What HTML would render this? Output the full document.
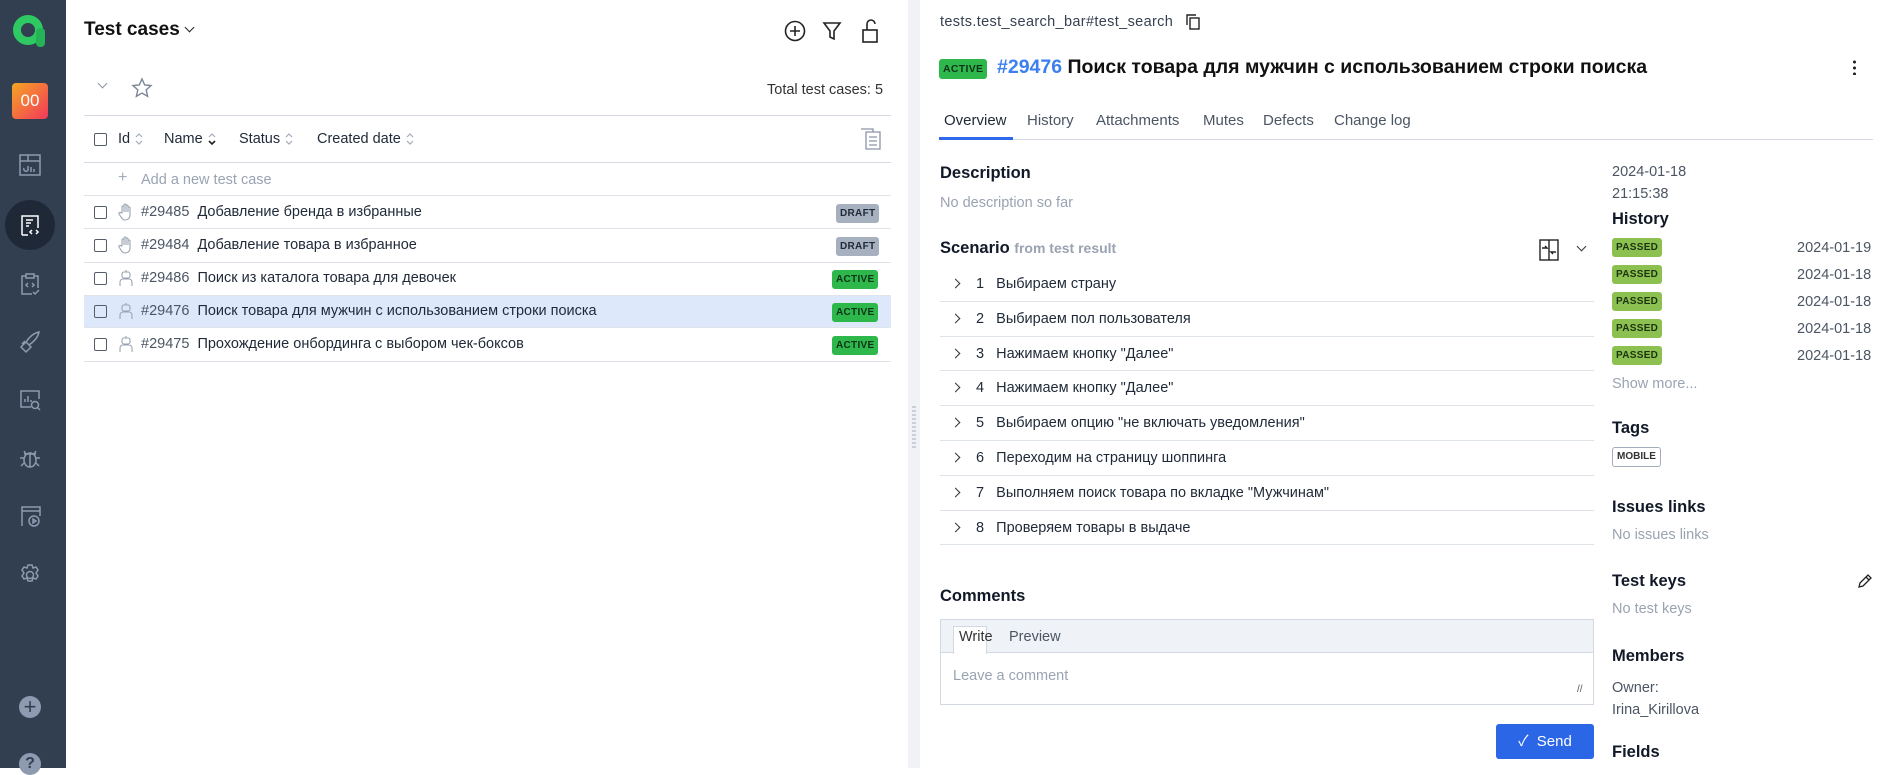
<!DOCTYPE html>
<html><head><meta charset="utf-8"><style>
*{box-sizing:border-box;margin:0;padding:0}
body{width:1886px;height:768px;overflow:hidden;background:#fff;font-family:"Liberation Sans","Noto Sans CJK SC",sans-serif;color:#1f2937;position:relative}
.a{position:absolute;white-space:nowrap}
.sb{left:0;top:0;width:66px;height:768px;background:#323f51}
.ic{position:absolute;left:18px;width:24px;height:24px}
.ic svg{width:24px;height:24px;fill:none;stroke:#8d9ab0;stroke-width:1.5}
.line{position:absolute;height:1px;background:#dfe3ea}
.cb{position:absolute;width:13px;height:13px;border:1.5px solid #555d6a;border-radius:2px}
.badge{position:absolute;font-size:10px;font-weight:bold;padding:0 4px;height:19px;line-height:19px;border-radius:3px;letter-spacing:.3px}
.draft{background:#a6b0bf;color:#1f2937}
.act{background:#2eb84b;color:#10331a}
.pass{background:#8cc152;color:#1c3310}
.row{font-size:14.5px;color:#1f2937}
.gray{color:#9aa3b2}
.h{font-size:16.5px;font-weight:bold;color:#111827}
.chev{position:absolute;width:7px;height:7px;border-right:1.5px solid #333;border-top:1.5px solid #333;transform:rotate(45deg)}
.srt{display:inline-block;vertical-align:middle;margin-left:5px}
.ri{position:absolute;left:118px}
</style></head><body>
<div class="a sb"></div>
<svg class="a" style="left:10px;top:10px" width="40" height="40" viewBox="0 0 40 40"><circle cx="18" cy="20" r="11" fill="none" stroke="#2fc964" stroke-width="8"/><rect x="26" y="18" width="9" height="19" rx="4" fill="#26b257"/></svg>
<div class="a" style="left:12px;top:83px;width:36px;height:36px;border-radius:4px;background:linear-gradient(135deg,#f5a623,#f2385a);color:#fff;font-size:17px;text-align:center;line-height:36px">00</div>
<div class="ic" style="top:153px"><svg viewBox="0 0 24 24"><rect x="2" y="2" width="20" height="20"/><path d="M2 8h20M10 2v6M6 15a2 2 0 0 0 4 2v-4M13 14v5M16 16v3"/></svg></div>
<div class="a" style="left:5px;top:200px;width:50px;height:50px;border-radius:50%;background:#1f2836"></div>
<div class="ic" style="top:213px"><svg viewBox="0 0 24 24" style="stroke:#fff"><path d="M4 22V3h16v12M8 7h7M8 10h5M8 13h3M4 22h6M14 17l-2 2 2 2M18 17l2 2-2 2"/></svg></div>
<div class="ic" style="top:272px"><svg viewBox="0 0 24 24"><path d="M8 4H4v18h10M16 4h4v12M8 2h8v4H8zM10 11l-2 2 2 2M14 11l2 2-2 2M15 20l2 2 4-4"/></svg></div>
<div class="ic" style="top:330px"><svg viewBox="0 0 24 24"><path d="M5 19l-2-2 5-5 5 5-5 5zM8 12c4-6 8-9 13-10-1 5-4 9-10 13M4 14l3-3M10 20l3-3"/></svg></div>
<div class="ic" style="top:388px"><svg viewBox="0 0 24 24"><path d="M13 19H3V3h18v8M7 14v-3M10 14V8M13 14v-2"/><circle cx="17" cy="17" r="3.5"/><path d="M19.5 19.5L22 22"/></svg></div>
<div class="ic" style="top:446px"><svg viewBox="0 0 24 24"><ellipse cx="12" cy="14" rx="6" ry="7"/><path d="M12 7v14M6 12H2M18 12h4M6 17l-3 3M18 17l3 3M8 8L6 5M16 8l2-3M6 8h12"/></svg></div>
<div class="ic" style="top:504px"><svg viewBox="0 0 24 24"><path d="M4 22V3h18v9M4 7h18"/><circle cx="16" cy="17" r="5"/><path d="M15 15v4l3-2z"/></svg></div>
<div class="ic" style="top:563px"><svg viewBox="0 0 24 24"><circle cx="12" cy="12" r="3.5"/><path d="M10 2h4l1 3 3-1 2 3-2 3 2 3-2 3-3-1-1 3h-4l-1-3-3 1-2-3 2-3-2-3 2-3 3 1z"/></svg></div>
<div class="a" style="left:19px;top:696px;width:22px;height:22px;border-radius:50%;background:#8d9ab0;color:#323f51;font-size:22px;line-height:21px;text-align:center">+</div>
<div class="a" style="left:19px;top:753px;width:22px;height:22px;border-radius:50%;background:#8d9ab0;color:#323f51;font-size:16px;font-weight:bold;line-height:22px;text-align:center">?</div>

<!-- left panel -->
<div class="a" style="left:84px;top:19px;font-size:19px;font-weight:bold;color:#111">Test cases</div>
<div class="chev" style="left:186px;top:24px;transform:rotate(135deg);border-color:#222"></div>
<svg class="a" style="left:783px;top:19px" width="24" height="24" viewBox="0 0 24 24" fill="none" stroke="#222" stroke-width="1.6"><circle cx="12" cy="12" r="9.5"/><path d="M12 7v10M7 12h10"/></svg>
<svg class="a" style="left:821px;top:19px" width="22" height="24" viewBox="0 0 22 24" fill="none" stroke="#222" stroke-width="1.6"><path d="M3 4h16l-6 8v8l-4-2v-6z"/></svg>
<svg class="a" style="left:859px;top:18px" width="22" height="26" viewBox="0 0 22 26" fill="none" stroke="#222" stroke-width="1.6"><rect x="4" y="12" width="14" height="12"/><path d="M8 12V6a4 4 0 0 1 8 0"/></svg>
<div class="chev" style="left:99px;top:80px;transform:rotate(135deg);border-color:#8a94a6"></div>
<svg class="a" style="left:131px;top:77px" width="22" height="22" viewBox="0 0 22 22" fill="none" stroke="#7b8596" stroke-width="1.4"><path d="M11 2l2.7 6 6.3.6-4.8 4.3 1.4 6.4L11 16l-5.6 3.3 1.4-6.4L2 8.6 8.3 8z"/></svg>
<div class="a" style="left:767px;top:82px;font-size:14.5px;color:#333">Total test cases: 5</div>
<div class="line" style="left:84px;top:115px;width:807px;background:#d6dbe3"></div>
<div class="cb" style="left:94px;top:133px"></div>
<div class="a row" style="left:118px;top:131px">Id<svg class="srt" width="8" height="14" viewBox="0 0 8 14" fill="none" stroke="#a3acba" stroke-width="1.2"><path d="M1 5l3-3 3 3M1 9l3 3 3-3"/></svg></div>
<div class="a row" style="left:164px;top:131px">Name<svg class="srt" width="8" height="14" viewBox="0 0 8 14" fill="none" stroke-width="1.2"><path d="M1 5l3-3 3 3" stroke="#a3acba"/><path d="M1 9l3 3 3-3" stroke="#222" stroke-width="1.6"/></svg></div>
<div class="a row" style="left:239px;top:131px">Status<svg class="srt" width="8" height="14" viewBox="0 0 8 14" fill="none" stroke="#a3acba" stroke-width="1.2"><path d="M1 5l3-3 3 3M1 9l3 3 3-3"/></svg></div>
<div class="a row" style="left:317px;top:131px">Created date<svg class="srt" width="8" height="14" viewBox="0 0 8 14" fill="none" stroke="#a3acba" stroke-width="1.2"><path d="M1 5l3-3 3 3M1 9l3 3 3-3"/></svg></div>
<svg class="a" style="left:860px;top:128px" width="22" height="22" viewBox="0 0 22 22" fill="none" stroke="#8a94a6" stroke-width="1.3"><path d="M1 1h12v3M6 4h14v17H6zM9 9h8M9 13h8M9 17h8"/></svg>
<div class="line" style="left:84px;top:162px;width:807px;background:#d6dbe3"></div>
<div class="a" style="left:118px;top:169px;font-size:16px;color:#a3acba">+</div>
<div class="a row gray" style="left:141px;top:172px;color:#9aa3b2">Add a new test case</div>
<div class="line" style="left:84px;top:195px;width:807px"></div>
<div class="a" style="left:84px;top:295px;width:807px;height:32px;background:#dde9fb"></div>
<div class="line" style="left:84px;top:228px;width:807px"></div>
<div class="line" style="left:84px;top:262px;width:807px"></div>
<div class="line" style="left:84px;top:295px;width:807px"></div>
<div class="line" style="left:84px;top:327px;width:807px"></div>
<div class="line" style="left:84px;top:361px;width:807px"></div>

<svg width="0" height="0" style="position:absolute"><defs>
<symbol id="hand" viewBox="0 0 16 18"><path d="M4 10V4a1 1 0 0 1 2 0v5V2a1 1 0 0 1 2 0v7V3a1 1 0 0 1 2 0v6V5a1 1 0 0 1 2 0v7c0 3-2 5-5 5-2 0-3-1-4-3l-2-3a1 1 0 0 1 2-1z" fill="none" stroke="#9aa3b2" stroke-width="1.1"/></symbol>
<symbol id="bot" viewBox="0 0 16 18"><g fill="none" stroke="#9aa3b2" stroke-width="1.1"><rect x="4" y="3" width="8" height="6" rx="2"/><path d="M8 1v2M2 17v-4a3 3 0 0 1 3-3h6a3 3 0 0 1 3 3v4M6 6h0M10 6h0"/></g></symbol>
</defs></svg>

<div class="cb" style="left:94px;top:206px"></div><svg class="ri" style="top:203px" width="16" height="18"><use href="#hand"/></svg><div class="a row" style="left:141px;top:204px"><span style="color:#4b5563">#29485</span>&nbsp; Добавление бренда в избранные</div><div class="badge draft" style="left:836px;top:204px">DRAFT</div>
<div class="cb" style="left:94px;top:239px"></div><svg class="ri" style="top:236px" width="16" height="18"><use href="#hand"/></svg><div class="a row" style="left:141px;top:237px"><span style="color:#4b5563">#29484</span>&nbsp; Добавление товара в избранное</div><div class="badge draft" style="left:836px;top:237px">DRAFT</div>
<div class="cb" style="left:94px;top:272px"></div><svg class="ri" style="top:269px" width="16" height="18"><use href="#bot"/></svg><div class="a row" style="left:141px;top:270px"><span style="color:#4b5563">#29486</span>&nbsp; Поиск из каталога товара для девочек</div><div class="badge act" style="left:832px;top:270px">ACTIVE</div>
<div class="cb" style="left:94px;top:305px"></div><svg class="ri" style="top:302px" width="16" height="18"><use href="#bot"/></svg><div class="a row" style="left:141px;top:303px"><span style="color:#4b5563">#29476</span>&nbsp; Поиск товара для мужчин с использованием строки поиска</div><div class="badge act" style="left:832px;top:303px">ACTIVE</div>
<div class="cb" style="left:94px;top:338px"></div><svg class="ri" style="top:335px" width="16" height="18"><use href="#bot"/></svg><div class="a row" style="left:141px;top:336px"><span style="color:#4b5563">#29475</span>&nbsp; Прохождение онбординга с выбором чек-боксов</div><div class="badge act" style="left:832px;top:336px">ACTIVE</div>

<!-- splitter -->
<div class="a" style="left:908px;top:0;width:12px;height:768px;background:#f0f2f6"></div>
<div class="a" style="left:912px;top:406px;width:4px;height:42px;background:repeating-linear-gradient(#c9ced8 0 2px,transparent 2px 4px)"></div>

<!-- right panel -->
<div class="a" style="left:940px;top:14px;font-size:14.5px;color:#374151;letter-spacing:.35px">tests.test_search_bar#test_search</div>
<svg class="a" style="left:1186px;top:14px" width="14" height="16" viewBox="0 0 14 16" fill="none" stroke="#222" stroke-width="1.4"><path d="M1 11V1h9"/><rect x="4" y="4" width="9" height="11"/></svg>
<div class="badge act" style="left:939px;top:59px;height:20px;line-height:20px;font-size:10.5px">ACTIVE</div>
<div class="a" style="left:997px;top:56px;font-size:19.5px;font-weight:bold;color:#111"><span style="color:#3b7ff0">#29476</span> Поиск товара для мужчин с использованием строки поиска</div>
<div class="a" style="left:1853px;top:59px;width:3px;height:16px;background:radial-gradient(circle,#222 1.4px,transparent 1.6px) 0 0/3px 6px"></div>
<div class="a" style="left:944px;top:112px;font-size:15px;color:#1f2937">Overview</div>
<div class="a" style="left:1027px;top:112px;font-size:15px;color:#4b5563">History</div>
<div class="a" style="left:1096px;top:112px;font-size:15px;color:#4b5563">Attachments</div>
<div class="a" style="left:1203px;top:112px;font-size:15px;color:#4b5563">Mutes</div>
<div class="a" style="left:1263px;top:112px;font-size:15px;color:#4b5563">Defects</div>
<div class="a" style="left:1334px;top:112px;font-size:15px;color:#4b5563">Change log</div>
<div class="line" style="left:939px;top:139px;width:934px;background:#d6dbe3"></div>
<div class="a" style="left:939px;top:137px;width:74px;height:3px;background:#2f68e8"></div>

<div class="a h" style="left:940px;top:164px">Description</div>
<div class="a gray" style="left:940px;top:195px;font-size:14.5px">No description so far</div>
<div class="a h" style="left:940px;top:239px">Scenario <span style="color:#9aa3b2;font-size:14px">from test result</span></div>
<svg class="a" style="left:1539px;top:239px" width="20" height="22" viewBox="0 0 20 22" fill="none" stroke="#222" stroke-width="1.4"><rect x="1" y="1" width="18" height="20"/><path d="M10 1v20M3 9h5l-2-2M17 13h-5l2 2"/></svg>
<div class="chev" style="left:1578px;top:243px;transform:rotate(135deg)"></div>
<div class="a" style="left:940px;top:267px;width:654px">
<div style="position:relative;height:34.8px;border-bottom:1px solid #dfe3ea"><span class="chev" style="left:12px;top:13px"></span><span class="a row" style="left:36px;top:9px">1&nbsp;&nbsp;&nbsp;Выбираем страну</span></div>
<div style="position:relative;height:34.8px;border-bottom:1px solid #dfe3ea"><span class="chev" style="left:12px;top:13px"></span><span class="a row" style="left:36px;top:9px">2&nbsp;&nbsp;&nbsp;Выбираем пол пользователя</span></div>
<div style="position:relative;height:34.8px;border-bottom:1px solid #dfe3ea"><span class="chev" style="left:12px;top:13px"></span><span class="a row" style="left:36px;top:9px">3&nbsp;&nbsp;&nbsp;Нажимаем кнопку "Далее"</span></div>
<div style="position:relative;height:34.8px;border-bottom:1px solid #dfe3ea"><span class="chev" style="left:12px;top:13px"></span><span class="a row" style="left:36px;top:9px">4&nbsp;&nbsp;&nbsp;Нажимаем кнопку "Далее"</span></div>
<div style="position:relative;height:34.8px;border-bottom:1px solid #dfe3ea"><span class="chev" style="left:12px;top:13px"></span><span class="a row" style="left:36px;top:9px">5&nbsp;&nbsp;&nbsp;Выбираем опцию "не включать уведомления"</span></div>
<div style="position:relative;height:34.8px;border-bottom:1px solid #dfe3ea"><span class="chev" style="left:12px;top:13px"></span><span class="a row" style="left:36px;top:9px">6&nbsp;&nbsp;&nbsp;Переходим на страницу шоппинга</span></div>
<div style="position:relative;height:34.8px;border-bottom:1px solid #dfe3ea"><span class="chev" style="left:12px;top:13px"></span><span class="a row" style="left:36px;top:9px">7&nbsp;&nbsp;&nbsp;Выполняем поиск товара по вкладке "Мужчинам"</span></div>
<div style="position:relative;height:34.8px;border-bottom:1px solid #dfe3ea"><span class="chev" style="left:12px;top:13px"></span><span class="a row" style="left:36px;top:9px">8&nbsp;&nbsp;&nbsp;Проверяем товары в выдаче</span></div>
</div>

<div class="a h" style="left:940px;top:587px">Comments</div>
<div class="a" style="left:940px;top:619px;width:654px;height:86px;border:1px solid #d3d9e2">
<div style="height:33px;background:#eff2f7;border-bottom:1px solid #d3d9e2;position:relative">
<div style="position:absolute;left:12px;top:6px;height:28px;background:#fff;border:1px solid #d3d9e2;border-bottom:none;width:34px"></div>
<span class="a" style="left:18px;top:9px;font-size:14.5px;color:#333">Write</span><span class="a" style="left:68px;top:9px;font-size:14.5px;color:#4b5563">Preview</span></div>
<span class="a gray" style="left:12px;top:48px;font-size:14.5px">Leave a comment</span>
<span class="a" style="left:636px;top:64px;font-size:10px;color:#555">//</span>
</div>
<div class="a" style="left:1496px;top:724px;width:98px;height:35px;background:#2b66e6;border-radius:3px;color:#fff;font-size:15px;line-height:35px;text-align:center">✓&nbsp;&nbsp;Send</div>

<!-- side column -->
<div class="a" style="left:1612px;top:161px;font-size:14.5px;color:#4b5563;line-height:22px">2024-01-18<br>21:15:38</div>
<div class="a h" style="left:1612px;top:210px">History</div>
<div class="badge pass" style="left:1612px;top:238px">PASSED</div><div class="a" style="left:1797px;top:240px;font-size:14.5px;color:#4b5563">2024-01-19</div>
<div class="badge pass" style="left:1612px;top:265px">PASSED</div><div class="a" style="left:1797px;top:267px;font-size:14.5px;color:#4b5563">2024-01-18</div>
<div class="badge pass" style="left:1612px;top:292px">PASSED</div><div class="a" style="left:1797px;top:294px;font-size:14.5px;color:#4b5563">2024-01-18</div>
<div class="badge pass" style="left:1612px;top:319px">PASSED</div><div class="a" style="left:1797px;top:321px;font-size:14.5px;color:#4b5563">2024-01-18</div>
<div class="badge pass" style="left:1612px;top:346px">PASSED</div><div class="a" style="left:1797px;top:348px;font-size:14.5px;color:#4b5563">2024-01-18</div>
<div class="a gray" style="left:1612px;top:376px;font-size:14.5px">Show more...</div>
<div class="a h" style="left:1612px;top:419px">Tags</div>
<div class="a" style="left:1612px;top:447px;height:20px;line-height:18px;padding:0 4px;border:1px solid #a3acba;border-radius:3px;font-size:10px;font-weight:bold;color:#333">MOBILE</div>
<div class="a h" style="left:1612px;top:498px">Issues links</div>
<div class="a gray" style="left:1612px;top:527px;font-size:14.5px">No issues links</div>
<div class="a h" style="left:1612px;top:572px">Test keys</div>
<svg class="a" style="left:1857px;top:573px" width="16" height="16" viewBox="0 0 16 16" fill="none" stroke="#222" stroke-width="1.3"><path d="M2 14l1-4 8-8 3 3-8 8zM9 4l3 3"/></svg>
<div class="a gray" style="left:1612px;top:601px;font-size:14.5px">No test keys</div>
<div class="a h" style="left:1612px;top:647px">Members</div>
<div class="a" style="left:1612px;top:677px;font-size:14.5px;color:#4b5563;line-height:22px">Owner:<br>Irina_Kirillova</div>
<div class="a h" style="left:1612px;top:743px">Fields</div>
</body></html>
